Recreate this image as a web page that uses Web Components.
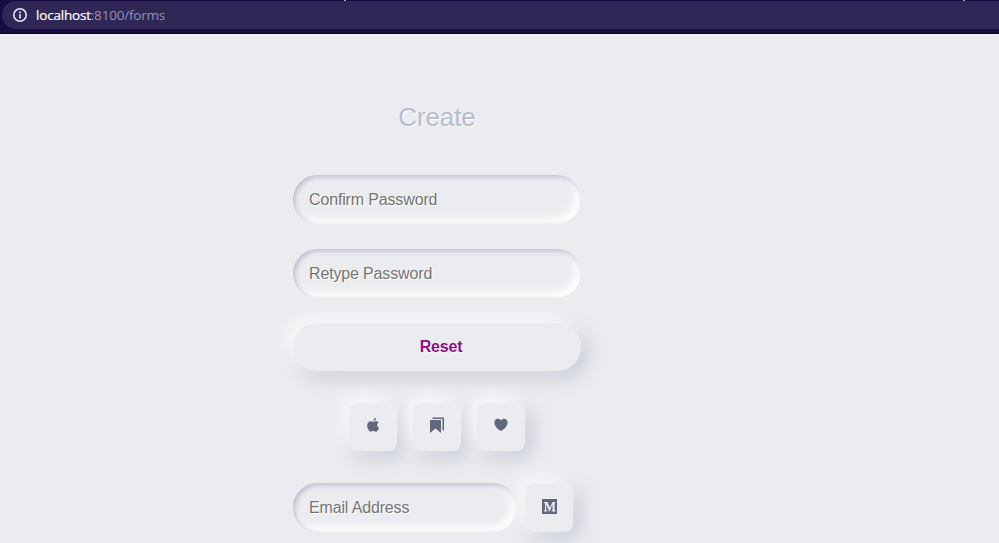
<!DOCTYPE html>
<html lang="en"><head><meta charset="utf-8"><title>Forms</title>
<style>
html,body{margin:0;height:100%;overflow:hidden;background:#ebecf0}
body{font-family:"Liberation Sans",Arial,sans-serif;font-size:16px;letter-spacing:-.2px;color:#61677c;text-shadow:1px 1px 1px #fff}
</style></head><body>
<forms-page></forms-page>
<script>
const define=(name,html)=>customElements.define(name,class extends HTMLElement{
  constructor(){super();this.attachShadow({mode:'open'}).innerHTML=html;}
});
define('address-bar',`<style>
:host{display:block;box-sizing:border-box;height:34px;padding:1px 0 5px 2px;background:linear-gradient(#190c44 0 32px,#0e0530 33px);position:relative;letter-spacing:0;text-shadow:none}
.pill{box-sizing:border-box;height:28px;display:flex;align-items:center;gap:8px;padding-left:10px;background:#302756;border-radius:14px 0 0 14px;font:13.5px/28px "Open Sans",sans-serif;color:#9790b3}
.url{letter-spacing:-.2px}
b{font-weight:400;color:#fff;-webkit-text-stroke:.2px #fff}
i{position:absolute;top:0;width:2px;height:1px;background:#aaa4c0}
svg{display:block}
</style><div class="pill"><svg width="16" height="16" viewBox="0 0 16 16"><circle cx="8" cy="8" r="6.2" fill="none" stroke="#e6e3f0" stroke-width="1.6"/><path d="M7.2 7.2h1.7v4.2H7.2zM7.2 4.5h1.7v1.7H7.2z" fill="#e6e3f0"/></svg><span class="url"><b>localhost</b>:8100/forms</span></div><i style="left:344px"></i><i style="left:963px"></i>`);
define('soft-title',`<style>:host{display:block;height:32px;line-height:32px;font-size:26px;text-align:center;color:#b6bcc9;letter-spacing:-.1px}</style><slot></slot>`);
define('soft-field',`<style>
:host{display:block;box-sizing:border-box;height:49px;padding:0 16px;border-radius:25px;line-height:49px;letter-spacing:-.15px;color:#757575;text-shadow:1px 1px 0 #fff;background:#ebecf0;box-shadow:inset 2px 2px 5px #babecc,inset -5px -5px 10px #fff}
</style><slot></slot>`);
define('soft-button',`<style>
:host{display:flex;box-sizing:border-box;height:48px;padding-left:8px;align-items:center;justify-content:center;border-radius:24px;font-weight:700;color:#8b108b;text-shadow:1px 1px 0 #fff;background:#ebecf0;box-shadow:-5px -5px 20px #fff,5px 5px 20px #babecc}
:host([square]){width:48px;flex:none;padding:0 0 4px;border-radius:8px;color:#61677c}
</style><slot></slot>`);
const glyphs={
apple:'<path d="M9 4.2C8.9 2.5 10.1 1.2 11.7 1c.1 1.8-1.2 3.2-2.7 3.2zM12.9 8.6c0-1.5.9-2.3 1.6-2.8-.7-1-1.8-1.4-2.7-1.4-1.2 0-2.1.7-2.8.7-.8 0-1.7-.7-2.8-.7-1.9 0-3.9 1.7-3.9 4.6 0 3.2 2.2 6.6 3.9 6.6.9 0 1.5-.6 2.6-.6s1.6.6 2.6.6c1.5 0 2.8-2.3 3.5-4-1.2-.5-2-1.6-2-3z"/>',
bookmarks:'<path d="M1 3h11v13l-5.5-4.6L1 16zM3.5.5H15V14l-1.5-1.3V2h-10z"/>',
heart:'<path d="M8.5 15C6.2 13.5 1.5 10.2 1.5 6 1.5 1.5 6.4.7 8.5 3.7 10.6.7 15.5 1.5 15.5 6 15.5 10.2 10.8 13.5 8.5 15z"/>',
medium:'<path fill-rule="evenodd" d="M1 1h15v15H1zM3 4v.6l1 1V12l-1.1.8v.6h3.5v-.6L5.2 12V6.3l3 7.1h.5l2.8-7.1v5.8l-.9.7v.6h4v-.6l-1-.8V5.3l1-.7V4h-3.2L9 9.8 6.5 4z"/>'};
customElements.define('soft-icon',class extends HTMLElement{
  constructor(){super();this.attachShadow({mode:'open'});}
  connectedCallback(){this.shadowRoot.innerHTML=`<style>:host{display:block}svg{display:block;fill:#61677c}</style><svg width="${this.getAttribute('size')}" height="${this.getAttribute('size')}" viewBox="0 0 17 17">${glyphs[this.getAttribute('name')]}</svg>`;}
});
define('forms-page',`<style>
:host{display:block}
main{width:288px;margin:0 0 0 293px;padding-top:67px;display:flex;flex-direction:column}
soft-title{margin-bottom:42px}
main>soft-field{margin-bottom:25px}
.icons{display:flex;justify-content:center;gap:16px;margin:32px 0}
.row{display:flex;gap:8px;align-items:flex-end}
.row soft-field{width:224px}
</style><address-bar></address-bar><main>
<soft-title>Create</soft-title>
<soft-field>Confirm Password</soft-field>
<soft-field>Retype Password</soft-field>
<soft-button>Reset</soft-button>
<div class="icons"><soft-button square><soft-icon name="apple" size="16"></soft-icon></soft-button><soft-button square><soft-icon name="bookmarks" size="17"></soft-icon></soft-button><soft-button square><soft-icon name="heart" size="16"></soft-icon></soft-button></div>
<div class="row"><soft-field>Email Address</soft-field><soft-button square><soft-icon name="medium" size="17"></soft-icon></soft-button></div>
</main>`);
</script></body></html>
